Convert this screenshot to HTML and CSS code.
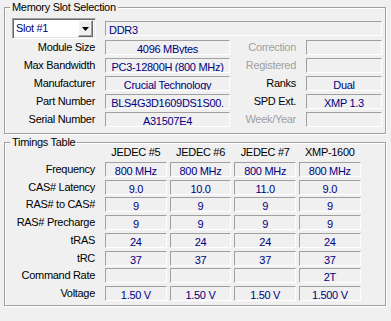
FILE: index.html
```html
<!DOCTYPE html>
<html>
<head>
<meta charset="utf-8">
<title>SPD</title>
<link rel="stylesheet" href="styles.css">
</head>
<body>

<fieldset class="group group-slot">
	<legend>Memory Slot Selection</legend>
	<div class="slot-grid">
		<div class="combo">
			<span class="combo-text">Slot #1</span>
			<span class="combo-btn"><svg width="7" height="4" viewBox="0 0 7 4"><path d="M0 0H7L3.5 4Z" fill="#000"/></svg></span>
		</div>
		<div class="field field-type">DDR3</div>

		<div class="lbl">Module Size</div>
		<div class="field">4096 MBytes</div>
		<div class="lbl off">Correction</div>
		<div class="field"></div>

		<div class="lbl">Max Bandwidth</div>
		<div class="field">PC3-12800H (800 MHz)</div>
		<div class="lbl off">Registered</div>
		<div class="field"></div>

		<div class="lbl">Manufacturer</div>
		<div class="field">Crucial Technology</div>
		<div class="lbl">Ranks</div>
		<div class="field">Dual</div>

		<div class="lbl">Part Number</div>
		<div class="field">BLS4G3D1609DS1S00.</div>
		<div class="lbl">SPD Ext.</div>
		<div class="field">XMP 1.3</div>

		<div class="lbl">Serial Number</div>
		<div class="field">A31507E4</div>
		<div class="lbl off">Week/Year</div>
		<div class="field"></div>
	</div>
</fieldset>

<fieldset class="group group-timings">
	<legend>Timings Table</legend>
	<div class="timing-grid">
		<div></div>
		<div class="head">JEDEC #5</div>
		<div class="head">JEDEC #6</div>
		<div class="head">JEDEC #7</div>
		<div class="head">XMP-1600</div>

		<div class="lbl">Frequency</div>
		<div class="field">800 MHz</div>
		<div class="field">800 MHz</div>
		<div class="field">800 MHz</div>
		<div class="field">800 MHz</div>

		<div class="lbl">CAS# Latency</div>
		<div class="field">9.0</div>
		<div class="field">10.0</div>
		<div class="field">11.0</div>
		<div class="field">9.0</div>

		<div class="lbl">RAS# to CAS#</div>
		<div class="field">9</div>
		<div class="field">9</div>
		<div class="field">9</div>
		<div class="field">9</div>

		<div class="lbl">RAS# Precharge</div>
		<div class="field">9</div>
		<div class="field">9</div>
		<div class="field">9</div>
		<div class="field">9</div>

		<div class="lbl">tRAS</div>
		<div class="field">24</div>
		<div class="field">24</div>
		<div class="field">24</div>
		<div class="field">24</div>

		<div class="lbl">tRC</div>
		<div class="field">37</div>
		<div class="field">37</div>
		<div class="field">37</div>
		<div class="field">37</div>

		<div class="lbl">Command Rate</div>
		<div class="field"></div>
		<div class="field"></div>
		<div class="field"></div>
		<div class="field">2T</div>

		<div class="lbl">Voltage</div>
		<div class="field">1.50 V</div>
		<div class="field">1.50 V</div>
		<div class="field">1.50 V</div>
		<div class="field">1.500 V</div>
	</div>
</fieldset>

</body>
</html>
```

FILE: styles.css
```css
* {
	box-sizing: border-box;
}

html, body {
	margin: 0;
	height: 100%;
}

body {
	padding: 1px 5px 0 4px;
	background: #f0f0f0;
	color: #000;
	font-family: "Liberation Sans", Arial, sans-serif;
	font-size: 11px;
	letter-spacing: -0.3px;
	overflow: hidden;
}

/* etched group box */
.group {
	margin: 0;
	border: 1px solid #a0a0a0;
	box-shadow: inset 1px 1px 0 #fff, 1px 1px 0 #fff;
	min-width: 0;
}
.group legend {
	margin-left: 5px;
	padding: 0 2px;
	line-height: 13px;
	background: #f0f0f0;
}

.group-slot {
	padding: 5px 3px 6px 0;
}
.group-timings {
	margin-top: 2px;
	padding: 0 3px 4px 0;
}

.lbl {
	text-align: right;
	line-height: 15px;
	white-space: nowrap;
}
.lbl.off {
	color: #a0a0a0;
}

/* static sunken text box */
.field {
	height: 15px;
	line-height: 14px;
	padding-top: 1px;
	border-top: 1px solid #a0a0a0;
	border-left: 1px solid #a0a0a0;
	border-bottom: 1px solid #fff;
	border-right: 1px solid #fff;
	color: #000080;
	text-align: center;
	white-space: nowrap;
	overflow: hidden;
}

.slot-grid {
	display: grid;
	grid-template-columns: 90px 125px 56px 76px;
	grid-template-rows: 18px repeat(5, 15px);
	column-gap: 10px;
	row-gap: 3px;
}

.combo {
	display: flex;
	align-items: center;
	width: 84px;
	height: 21px;
	margin: -1px 0 0 7px;
	border: 1px solid;
	border-color: #a0a0a0 #fff #fff #a0a0a0;
	box-shadow: inset 1px 1px 0 #696969, inset -1px -1px 0 #e3e3e3;
	background: #fff;
	padding: 2px;
}
.combo-text {
	flex: 1;
	padding-left: 1px;
	color: #000080;
	line-height: 15px;
}
.combo-btn {
	display: flex;
	align-items: center;
	justify-content: center;
	width: 15px;
	height: 17px;
	background: #f0f0f0;
	border: 1px solid;
	border-color: #fff #696969 #696969 #fff;
	box-shadow: inset -1px -1px 0 #a0a0a0;
}

.field-type {
	grid-column: 2 / 5;
	align-self: start;
	margin-top: 2px;
	text-align: left;
	padding-left: 3px;
}

.timing-grid {
	display: grid;
	grid-template-columns: 97px repeat(4, 61.67px);
	grid-template-rows: 14px repeat(8, 15px);
	column-gap: 3px;
	row-gap: 2.75px;
	margin-top: -4px;
}
.timing-grid .lbl {
	padding-right: 7px;
}
.head {
	text-align: center;
	line-height: 14px;
	white-space: nowrap;
}
```
